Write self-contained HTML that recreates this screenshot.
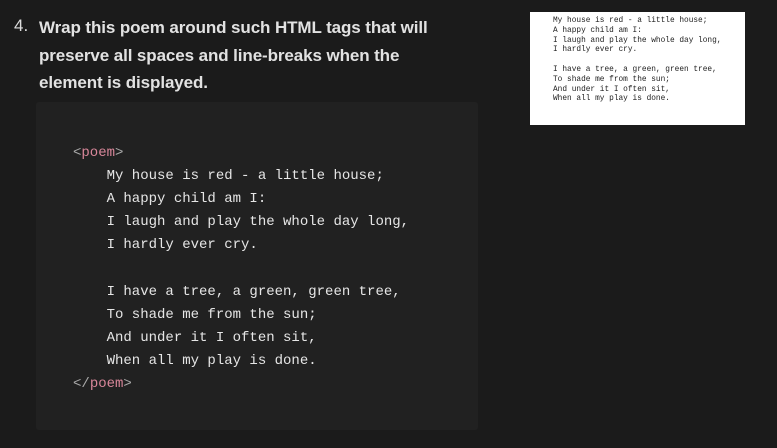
<!DOCTYPE html>
<html><head><style>
body{margin:0;width:777px;height:448px;background:#1b1b1b;overflow:hidden;position:relative;font-family:"Liberation Sans",sans-serif}
.num{position:absolute;left:14px;top:16px;color:#ddd;font-size:17px}
.h{position:absolute;left:39px;top:14px;width:420px;color:#e2e2e2;font-size:17px;font-weight:bold;line-height:27.5px;letter-spacing:-0.1px}
.code{position:absolute;left:36px;top:102px;width:442px;height:328px;background:#212121;border-radius:3px}
pre{margin:0;position:absolute;left:73px;top:142px;font-family:"Liberation Mono",monospace;font-size:14px;line-height:23.1px;color:#e6e6e6}
.t{color:#d9879a}.p{color:#aaa}
.box{position:absolute;left:530px;top:12px;width:215px;height:113px;background:#fff}
.box pre{left:23px;top:5px;font-size:7.8px;line-height:9.8px;color:#222}
</style></head><body>
<div class="num">4.</div>
<div class="h">Wrap this poem around such HTML tags that will preserve all spaces and line-breaks when the element is displayed.</div>
<div class="code"></div>
<pre><span class="p">&lt;</span><span class="t">poem</span><span class="p">&gt;</span>
    My house is red - a little house;
    A happy child am I:
    I laugh and play the whole day long,
    I hardly ever cry.

    I have a tree, a green, green tree,
    To shade me from the sun;
    And under it I often sit,
    When all my play is done.
<span class="p">&lt;/</span><span class="t">poem</span><span class="p">&gt;</span></pre>
<div class="box"><pre>My house is red - a little house;
A happy child am I:
I laugh and play the whole day long,
I hardly ever cry.

I have a tree, a green, green tree,
To shade me from the sun;
And under it I often sit,
When all my play is done.</pre></div>
</body></html>
